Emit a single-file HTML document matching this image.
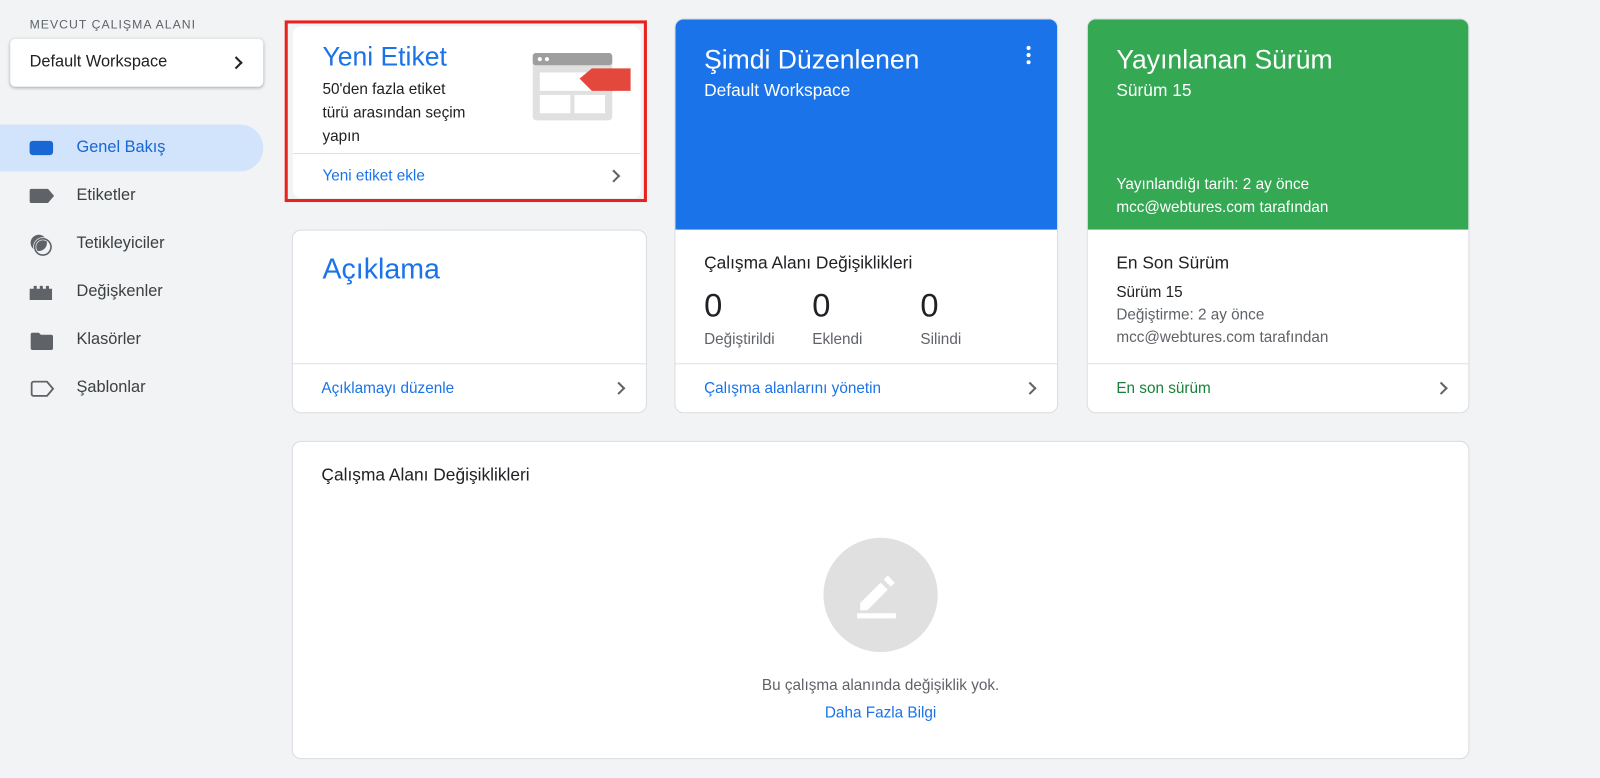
<!DOCTYPE html>
<html><head><meta charset="utf-8"><style>
*{box-sizing:border-box;margin:0;padding:0}
body{width:1600px;height:778px;background:#f1f3f4;font-family:"Liberation Sans",Arial,sans-serif;overflow:hidden;color:#202124}
#w{position:absolute;left:0;top:0;width:1568px;height:762px;transform:scale(1.0204);transform-origin:0 0}
.abs{position:absolute}
.card{position:absolute;background:#fff;border-radius:8px;box-shadow:0 0 0 1px #dadce0;overflow:hidden}
.foot{position:absolute;left:0;right:0;bottom:0;height:48px;border-top:1px solid #e0e0e0;font-size:15px;color:#1a73e8;padding:15px 28px;}
.chev{position:absolute;right:22px;width:9px;height:9px;border-right:2px solid #5f6368;border-top:2px solid #5f6368;transform:rotate(45deg);top:19px}
.nav{position:absolute;left:0;width:258px;height:46px;font-size:16px;color:#3c4043}
.nav span{position:absolute;left:75px;top:14px}
.big{font-size:26px}
</style></head><body><div id="w">
<div class="abs" style="left:29px;top:17px;font-size:12px;letter-spacing:1px;color:#5f6368">MEVCUT ÇALIŞMA ALANI</div>
<div class="abs" style="left:10px;top:38px;width:248px;height:47px;background:#fff;border-radius:5px;box-shadow:0 1px 3px rgba(0,0,0,.3)">
<span class="abs" style="left:19px;top:14px;font-size:16px">Default Workspace</span>
<div class="abs" style="right:22px;top:19px;width:9px;height:9px;border-right:2px solid #202124;border-top:2px solid #202124;transform:rotate(45deg)"></div></div>

<div class="nav" style="top:122px;background:#d2e3fc;border-radius:0 23px 23px 0;color:#1967d2"><div class="abs" style="left:29px;top:16px;width:23px;height:14px;background:#1967d2;border-radius:3px"></div><span>Genel Bakış</span></div>
<div class="nav" style="top:169px"><svg class="abs" style="left:29px;top:16px" width="24" height="14"><path d="M0 2a2 2 0 0 1 2-2h16l6 7-6 7H2a2 2 0 0 1-2-2z" fill="#5f6368"/></svg><span>Etiketler</span></div>
<div class="nav" style="top:216px"><svg class="abs" style="left:28px;top:12px" width="24" height="24"><circle cx="10" cy="10" r="8" fill="#5f6368"/><circle cx="14" cy="14" r="8" fill="none" stroke="#f1f3f4" stroke-width="3"/><circle cx="14" cy="14" r="8" fill="none" stroke="#5f6368" stroke-width="1.6"/></svg><span>Tetikleyiciler</span></div>
<div class="nav" style="top:263px"><svg class="abs" style="left:29px;top:17px" width="24" height="14"><path d="M0 3h4V0h3v3h3V0h3v3h3V0h3v3h3v11H0z" fill="#5f6368"/></svg><span>Değişkenler</span></div>
<div class="nav" style="top:310px"><svg class="abs" style="left:30px;top:16px" width="22" height="17"><path d="M0 2a2 2 0 0 1 2-2h6l2 2h10a2 2 0 0 1 2 2v11a2 2 0 0 1-2 2H2a2 2 0 0 1-2-2z" fill="#5f6368"/></svg><span>Klasörler</span></div>
<div class="nav" style="top:357px"><svg class="abs" style="left:30px;top:16px" width="24" height="16"><path d="M1 3a2 2 0 0 1 2-2h13l6 7-6 7H3a2 2 0 0 1-2-2z" fill="none" stroke="#5f6368" stroke-width="1.8"/></svg><span>Şablonlar</span></div>

<div class="abs" style="left:279px;top:20px;width:355px;height:178px;border:3px solid #e8231e"></div>
<div class="card" style="left:287px;top:26px;width:341px;height:168px;box-shadow:none">
<div class="abs big" style="left:29px;top:14px;color:#1a73e8">Yeni Etiket</div>
<div class="abs" style="left:29px;top:50px;font-size:15px;line-height:23px;white-space:nowrap">50'den fazla etiket<br>türü arasından seçim<br>yapın</div>
<svg class="abs" style="left:235px;top:26px" width="100" height="70"><rect x="0" y="0" width="78" height="66" rx="4" fill="#e0e0e0"/><rect x="0" y="0" width="78" height="12" rx="3" fill="#9e9e9e"/><circle cx="7" cy="6" r="2" fill="#fff"/><circle cx="14" cy="6" r="2" fill="#fff"/><rect x="7" y="19" width="64" height="18" fill="#fff"/><rect x="7" y="41" width="30" height="18" fill="#fff"/><rect x="41" y="41" width="30" height="18" fill="#fff"/><path d="M78 38l-20-19h20z" fill="#bdbdbd"/><path d="M46 25l12-10h38v22H58z" fill="#e4483d"/></svg>
<div class="foot" style="height:44px;padding:13px 29px">Yeni etiket ekle<div class="chev" style="top:17px"></div></div></div>

<div class="card" style="left:287px;top:226px;width:346px;height:178px">
<div class="abs" style="left:29px;top:22px;font-size:28px;color:#1a73e8">Açıklama</div>
<div class="foot">Açıklamayı düzenle<div class="chev"></div></div></div>

<div class="card" style="left:662px;top:19px;width:374px;height:385px">
<div class="abs" style="left:0;top:0;right:0;height:206px;background:#1a73e8"></div>
<div class="abs big" style="left:28px;top:24px;color:#fff">Şimdi Düzenlenen</div>
<div class="abs" style="left:28px;top:60px;font-size:17px;color:#fff">Default Workspace</div>
<div class="abs" style="left:344px;top:26px;width:4px;height:4px;background:#fff;border-radius:2px;box-shadow:0 7px 0 #fff,0 14px 0 #fff"></div>
<div class="abs" style="left:28px;top:229px;font-size:17px">Çalışma Alanı Değişiklikleri</div>
<div class="abs" style="left:28px;top:262px;font-size:32px">0</div><div class="abs" style="left:134px;top:262px;font-size:32px">0</div><div class="abs" style="left:240px;top:262px;font-size:32px">0</div>
<div class="abs" style="left:28px;top:305px;font-size:15px;color:#5f6368">Değiştirildi</div><div class="abs" style="left:134px;top:305px;font-size:15px;color:#5f6368">Eklendi</div><div class="abs" style="left:240px;top:305px;font-size:15px;color:#5f6368">Silindi</div>
<div class="foot">Çalışma alanlarını yönetin<div class="chev"></div></div></div>

<div class="card" style="left:1066px;top:19px;width:373px;height:385px">
<div class="abs" style="left:0;top:0;right:0;height:206px;background:#34a853"></div>
<div class="abs big" style="left:28px;top:24px;color:#fff">Yayınlanan Sürüm</div>
<div class="abs" style="left:28px;top:60px;font-size:17px;color:#fff">Sürüm 15</div>
<div class="abs" style="left:28px;top:150px;font-size:15px;line-height:23px;color:#fff">Yayınlandığı tarih: 2 ay önce<br>mcc@webtures.com tarafından</div>
<div class="abs" style="left:28px;top:229px;font-size:17px">En Son Sürüm</div>
<div class="abs" style="left:28px;top:257px;font-size:15px;line-height:22px;color:#5f6368"><span style="color:#202124">Sürüm 15</span><br>Değiştirme: 2 ay önce<br>mcc@webtures.com tarafından</div>
<div class="foot" style="color:#188038">En son sürüm<div class="chev"></div></div></div>

<div class="card" style="left:287px;top:433px;width:1152px;height:310px">
<div class="abs" style="left:28px;top:23px;font-size:17px">Çalışma Alanı Değişiklikleri</div>
<div class="abs" style="left:520px;top:94px;width:112px;height:112px;border-radius:50%;background:#e0e0e0"></div>
<svg class="abs" style="left:550px;top:124px" width="54" height="52"><path d="M6 34l20-20 7 7-20 20H6z M29 11l4-4 7 7-4 4z" fill="#fff"/><rect x="3" y="44" width="38" height="5" fill="#fff"/></svg>
<div class="abs" style="left:0;right:0;top:230px;text-align:center;font-size:15px;color:#5f6368">Bu çalışma alanında değişiklik yok.</div>
<div class="abs" style="left:0;right:0;top:257px;text-align:center;font-size:15px;color:#1a73e8">Daha Fazla Bilgi</div>
</div>
</div></body></html>
